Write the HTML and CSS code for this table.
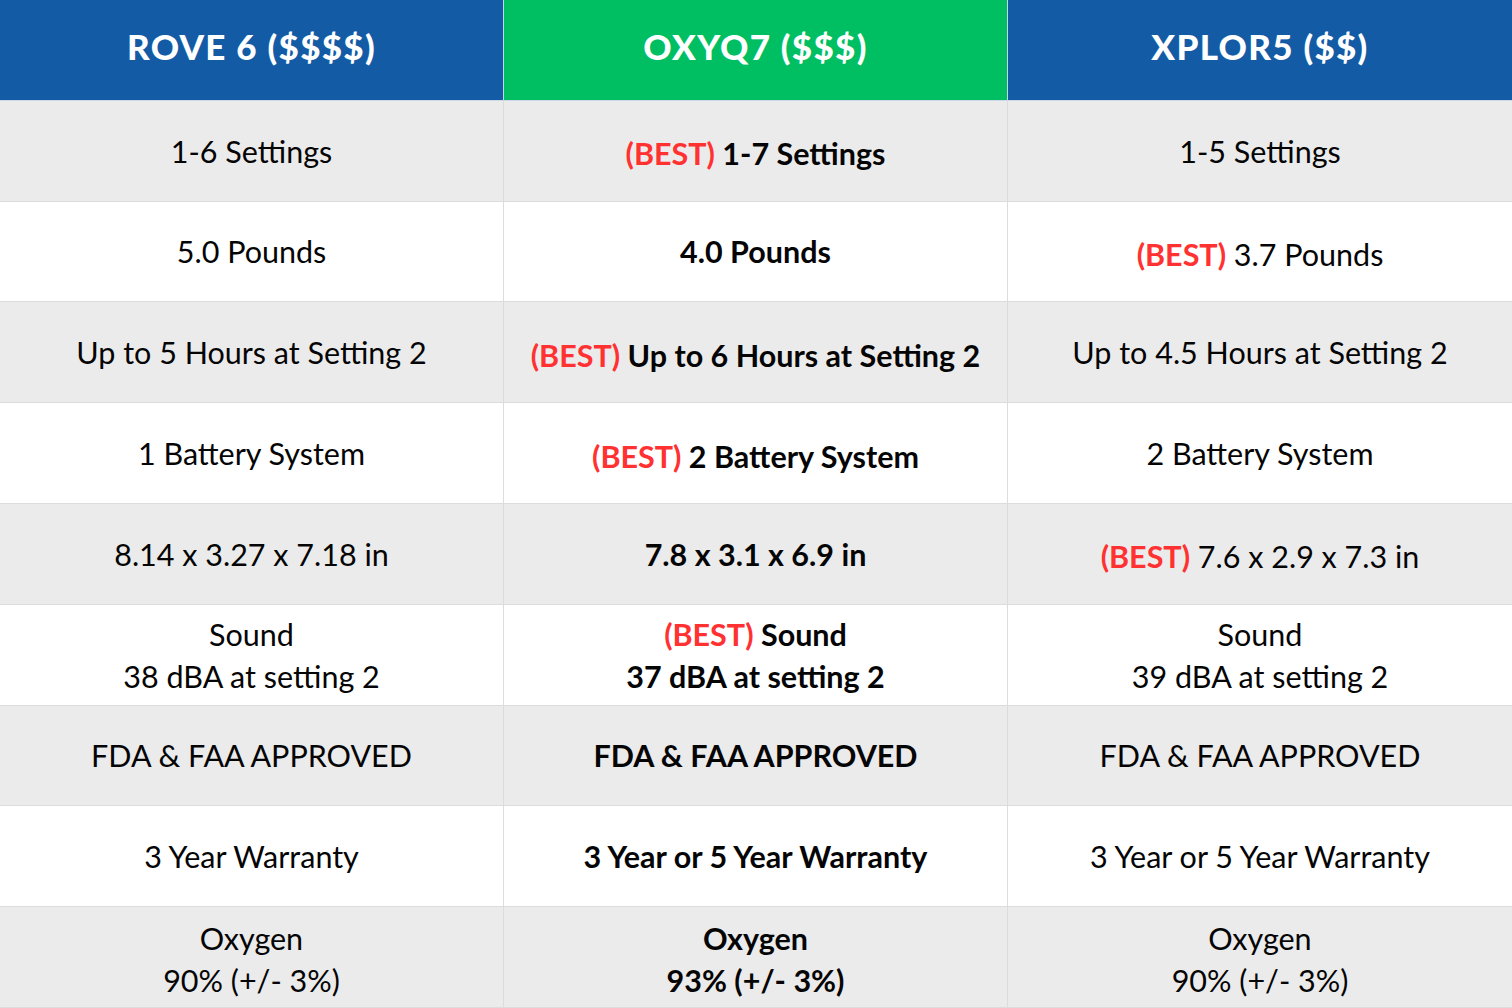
FILE: index.html
```html
<!DOCTYPE html>
<html lang="en">
<head>
<meta charset="utf-8">
<title>Oxygen Concentrator Comparison</title>
<link rel="stylesheet" href="styles.css">
</head>
<body>
<div class="table">
  <div class="cell head blue"><p>ROVE 6 ($$$$)</p></div>
  <div class="cell head green"><p>OXYQ7 ($$$)</p></div>
  <div class="cell head blue"><p>XPLOR5 ($$)</p></div>

  <div class="cell gray"><p>1-6 Settings</p></div>
  <div class="cell gray strong best-cell"><p><span class="best">(BEST)</span> 1-7 Settings</p></div>
  <div class="cell gray"><p>1-5 Settings</p></div>

  <div class="cell"><p>5.0 Pounds</p></div>
  <div class="cell strong"><p>4.0 Pounds</p></div>
  <div class="cell best-cell"><p><span class="best">(BEST)</span> 3.7 Pounds</p></div>

  <div class="cell gray"><p>Up to 5 Hours at Setting 2</p></div>
  <div class="cell gray strong best-cell"><p><span class="best">(BEST)</span> Up to 6 Hours at Setting 2</p></div>
  <div class="cell gray"><p>Up to 4.5 Hours at Setting 2</p></div>

  <div class="cell"><p>1 Battery System</p></div>
  <div class="cell strong best-cell"><p><span class="best">(BEST)</span> 2 Battery System</p></div>
  <div class="cell"><p>2 Battery System</p></div>

  <div class="cell gray"><p>8.14 x 3.27 x 7.18 in</p></div>
  <div class="cell gray strong"><p>7.8 x 3.1 x 6.9 in</p></div>
  <div class="cell gray best-cell"><p><span class="best">(BEST)</span> 7.6 x 2.9 x 7.3 in</p></div>

  <div class="cell"><p>Sound<br>38 dBA at setting 2</p></div>
  <div class="cell strong"><p><span class="best">(BEST)</span> Sound<br>37 dBA at setting 2</p></div>
  <div class="cell"><p>Sound<br>39 dBA at setting 2</p></div>

  <div class="cell gray"><p>FDA &amp; FAA APPROVED</p></div>
  <div class="cell gray strong"><p>FDA &amp; FAA APPROVED</p></div>
  <div class="cell gray"><p>FDA &amp; FAA APPROVED</p></div>

  <div class="cell"><p>3 Year Warranty</p></div>
  <div class="cell strong"><p>3 Year or 5 Year Warranty</p></div>
  <div class="cell"><p>3 Year or 5 Year Warranty</p></div>

  <div class="cell gray two-line"><p>Oxygen<br>90% (+/- 3%)</p></div>
  <div class="cell gray strong two-line"><p>Oxygen<br>93% (+/- 3%)</p></div>
  <div class="cell gray two-line"><p>Oxygen<br>90% (+/- 3%)</p></div>
</div>
</body>
</html>
```

FILE: styles.css
```css
html, body {
  margin: 0;
  padding: 0;
  background: #ffffff;
}

.table {
  display: grid;
  grid-template-columns: 504px 504px 504px;
  grid-template-rows: repeat(10, 100.8px);
  width: 1512px;
  height: 1008px;
  overflow: hidden;
  font-family: Lato, "Liberation Sans", sans-serif;
  font-size: 30.5px;
  color: #050505;
}

.cell {
  display: flex;
  align-items: center;
  justify-content: center;
  text-align: center;
  line-height: 42px;
  min-height: 0;
  border-right: 1px solid #dcdcdc;
  border-bottom: 1px solid #dcdcdc;
  background: #ffffff;
  box-sizing: border-box;
}

.cell p {
  margin: 0;
}

.cell:nth-child(3n) {
  border-right: none;
}

.cell.gray {
  background: #ebebeb;
}

.cell.strong {
  font-weight: 700;
}

.best-cell {
  padding-top: 5px;
}

.two-line {
  padding-top: 4px;
}

.best {
  color: #ff3131;
  font-weight: 700;
}

.head {
  color: #ffffff;
  font-weight: 900;
  font-size: 35px;
  letter-spacing: 1.3px;
  padding-bottom: 8px;
  border-bottom: 1px solid #cfd8e6;
  border-right: 1px solid #c6d6ea;
}

.head.blue {
  background: #145ba6;
}

.head.green {
  background: #00bf63;
}
```
